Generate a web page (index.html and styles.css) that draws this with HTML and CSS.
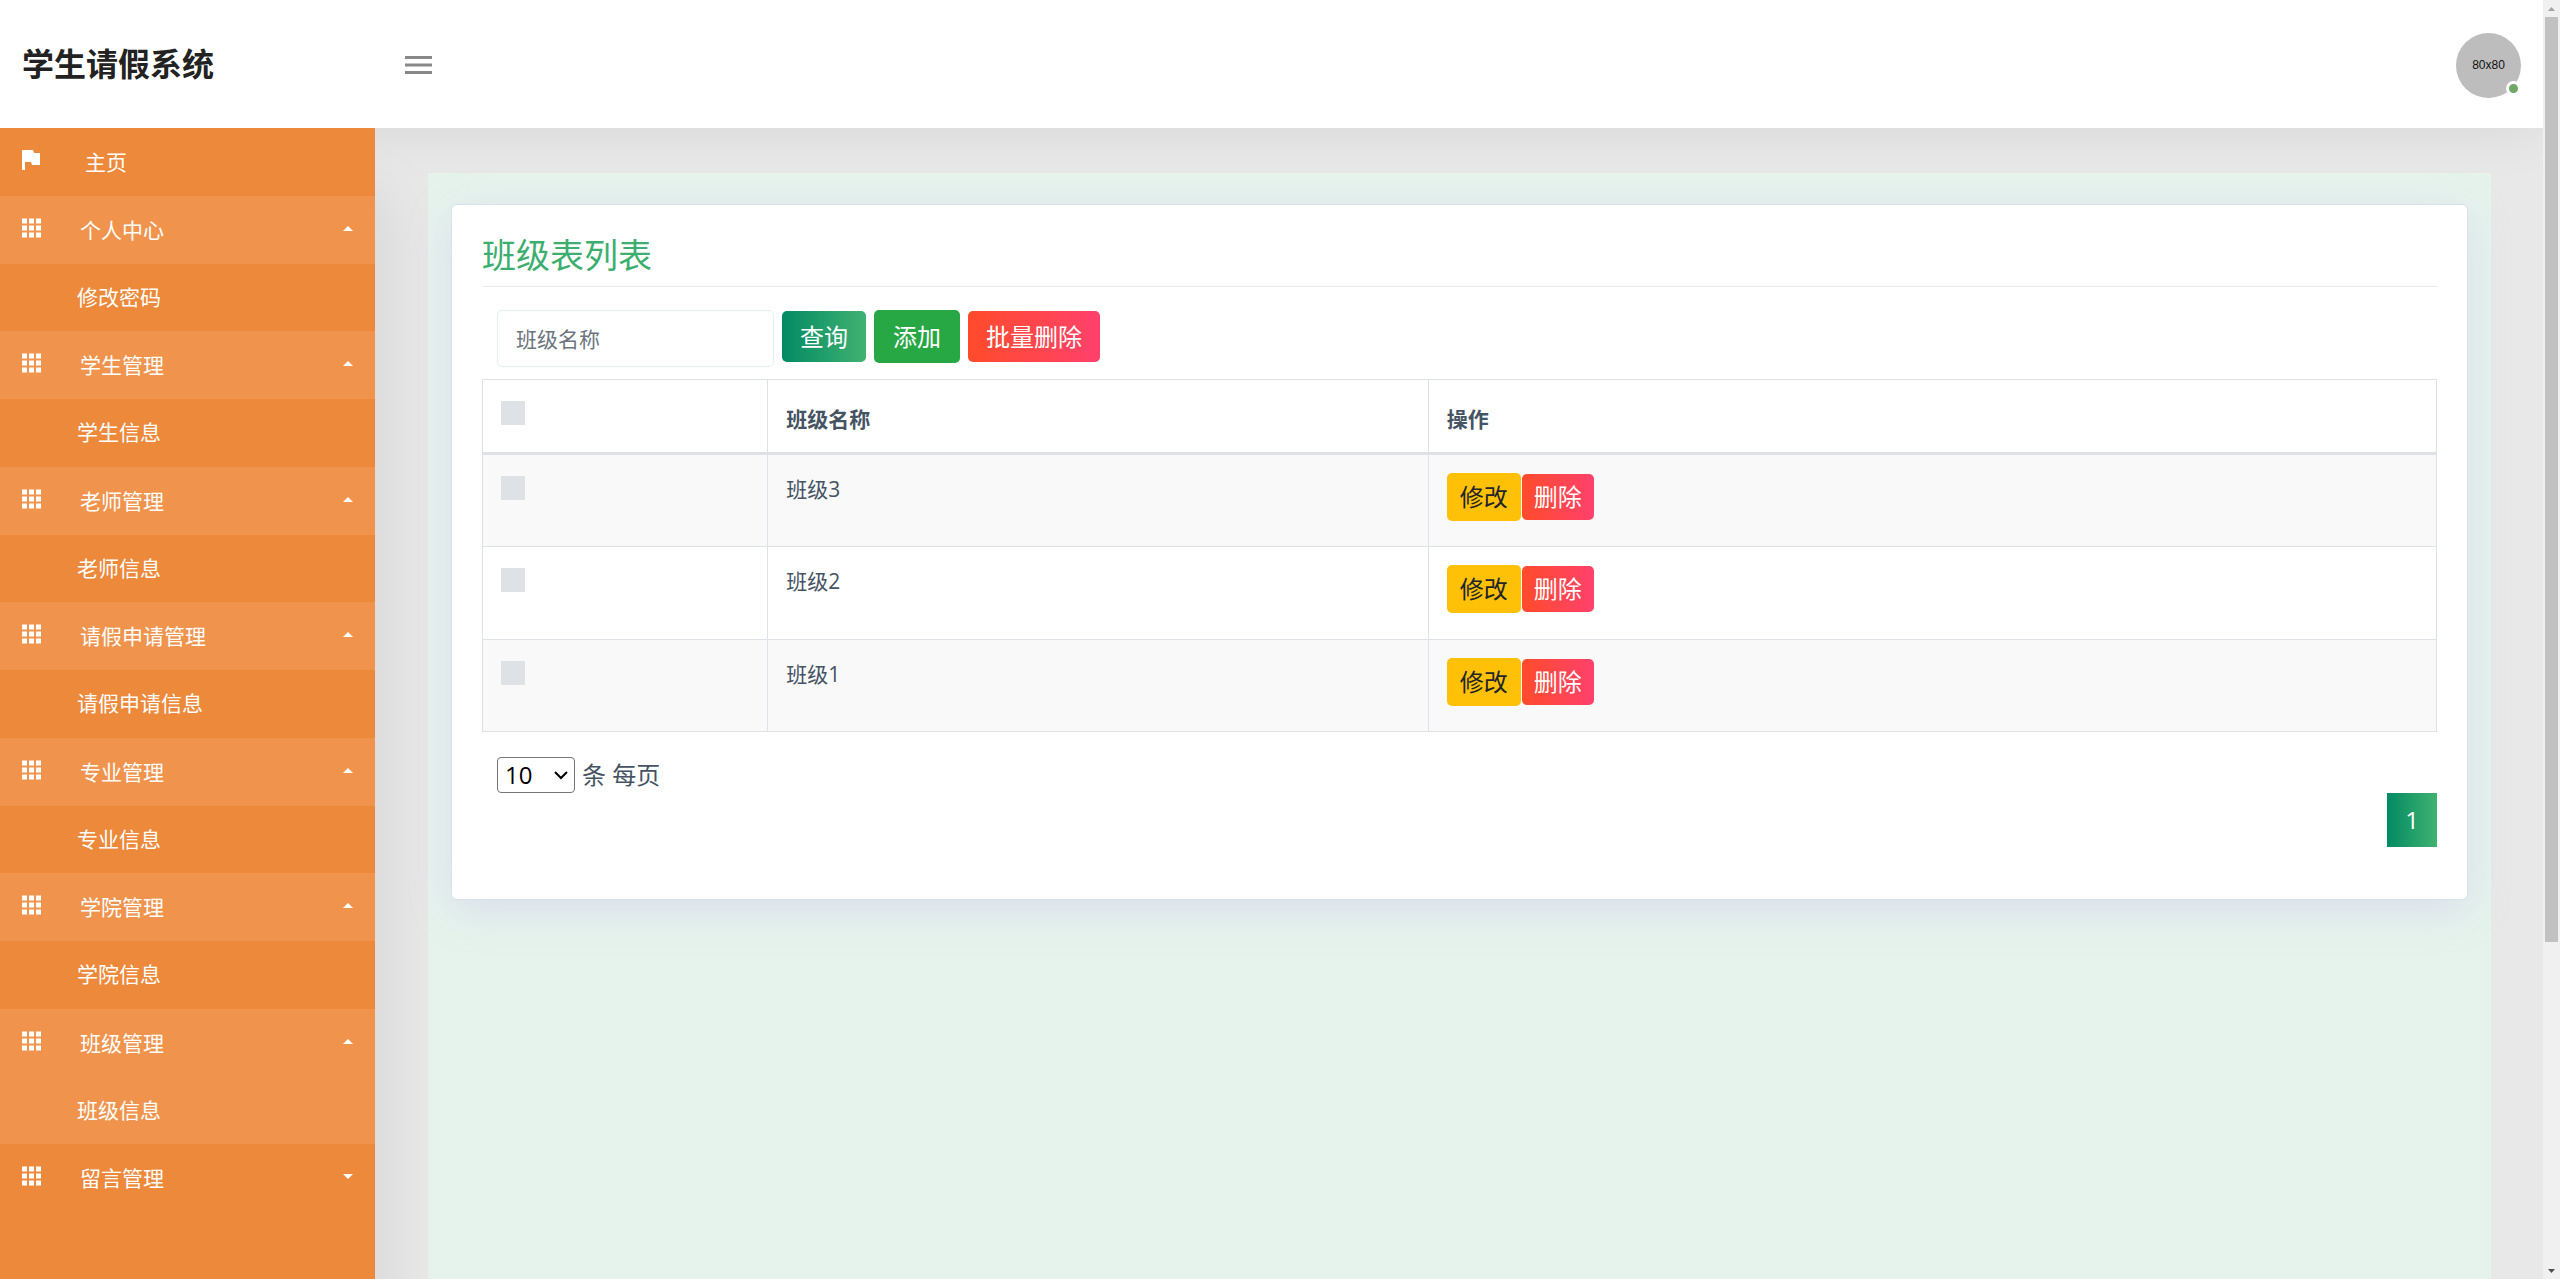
FILE: index.html
```html
<!DOCTYPE html>
<html lang="zh-CN">
<head>
<meta charset="utf-8">
<meta name="viewport" content="width=device-width, initial-scale=1">
<title>学生请假系统</title>
<link rel="stylesheet" href="styles.css">
</head>
<body>
<svg class="sprite" aria-hidden="true">
  <symbol id="grid" viewBox="0 0 19 19"><path d="M0 0h5v5H0zM7 0h5v5H7zM14 0h5v5h-5zM0 7h5v5H0zM7 7h5v5H7zM14 7h5v5h-5zM0 14h5v5H0zM7 14h5v5H7zM14 14h5v5h-5z"/></symbol>
  <symbol id="caret" viewBox="0 0 10 5"><path d="M0 5L5 0l5 5z"/></symbol>
</svg>
<header class="topbar">
  <h1 class="brand">学生请假系统</h1>
  <button class="toggle" type="button" aria-label="菜单"><svg viewBox="0 0 27 18"><path d="M0 0h27v3H0zM0 7.500h27v3H0zM0 15h27v3H0z"/></svg></button>
  <a class="avatar" href="#">80x80<span class="status"></span></a>
</header>
<div class="layout">
  <nav class="sidebar">
    <ul class="menu">
      <li><a class="parent home" href="#"><svg class="icon" viewBox="0 0 19 20"><path d="M0 0h11l1 3h6v12h-8l-1-3H3v8H0z"/></svg><span>主页</span></a></li>
      <li class="open"><a class="parent" href="#"><svg class="icon"><use href="#grid"/></svg><span>个人中心</span><svg class="caret"><use href="#caret"/></svg></a><a class="child" href="#">修改密码</a></li>
      <li class="open"><a class="parent" href="#"><svg class="icon"><use href="#grid"/></svg><span>学生管理</span><svg class="caret"><use href="#caret"/></svg></a><a class="child" href="#">学生信息</a></li>
      <li class="open"><a class="parent" href="#"><svg class="icon"><use href="#grid"/></svg><span>老师管理</span><svg class="caret"><use href="#caret"/></svg></a><a class="child" href="#">老师信息</a></li>
      <li class="open"><a class="parent" href="#"><svg class="icon"><use href="#grid"/></svg><span>请假申请管理</span><svg class="caret"><use href="#caret"/></svg></a><a class="child" href="#">请假申请信息</a></li>
      <li class="open"><a class="parent" href="#"><svg class="icon"><use href="#grid"/></svg><span>专业管理</span><svg class="caret"><use href="#caret"/></svg></a><a class="child" href="#">专业信息</a></li>
      <li class="open"><a class="parent" href="#"><svg class="icon"><use href="#grid"/></svg><span>学院管理</span><svg class="caret"><use href="#caret"/></svg></a><a class="child" href="#">学院信息</a></li>
      <li class="open"><a class="parent" href="#"><svg class="icon"><use href="#grid"/></svg><span>班级管理</span><svg class="caret"><use href="#caret"/></svg></a><a class="child active" href="#">班级信息</a></li>
      <li><a class="parent" href="#"><svg class="icon"><use href="#grid"/></svg><span>留言管理</span><svg class="caret down"><use href="#caret"/></svg></a></li>
    </ul>
  </nav>
  <main class="content">
    <div class="panel">
      <section class="card">
        <h2 class="title">班级表列表</h2>
        <form class="filters">
          <input class="search" type="text" placeholder="班级名称" aria-label="班级名称">
          <button class="btn green" type="button">查询</button>
          <button class="btn add" type="button">添加</button>
          <button class="btn red" type="button">批量删除</button>
        </form>
        <table class="data">
          <colgroup><col class="col-check"><col class="col-name"><col></colgroup>
          <thead>
            <tr><th class="pick"><input type="checkbox" aria-label="全选"></th><th>班级名称</th><th>操作</th></tr>
          </thead>
          <tbody>
            <tr><td><input type="checkbox" aria-label="班级3"></td><td>班级3</td><td><div class="actions"><button class="btn small edit" type="button">修改</button><button class="btn small red" type="button">删除</button></div></td></tr>
            <tr><td><input type="checkbox" aria-label="班级2"></td><td>班级2</td><td><div class="actions"><button class="btn small edit" type="button">修改</button><button class="btn small red" type="button">删除</button></div></td></tr>
            <tr><td><input type="checkbox" aria-label="班级1"></td><td>班级1</td><td><div class="actions"><button class="btn small edit" type="button">修改</button><button class="btn small red" type="button">删除</button></div></td></tr>
          </tbody>
        </table>
        <div class="per-page">
          <select id="size"><option>10</option><option>25</option><option>50</option></select>
          <label for="size">条 每页</label>
        </div>
        <div class="pager"><a class="page" href="#">1</a></div>
      </section>
    </div>
  </main>
</div>
<div class="scrollbar" aria-hidden="true">
  <svg class="arrow" viewBox="0 0 17 17"><path d="M5 11l3.500-4 3.500 4z" fill="#a3a3a3"/></svg>
  <div class="track"><div class="thumb"></div></div>
  <svg class="arrow" viewBox="0 0 17 17"><path d="M5 7h7l-3.500 4z" fill="#505050"/></svg>
</div>
</body>
</html>
```

FILE: styles.css
```css
* { box-sizing: border-box; }

body {
  margin: 0;
  height: 100vh;
  padding-right: 17px;
  display: flex;
  flex-direction: column;
  overflow: hidden;
  background: #e8e8e8;
  color: #455363;
  font: 24px/36px "Open Sans", "Noto Sans CJK SC", sans-serif;
}

a { color: inherit; text-decoration: none; }
button, input, select { font: inherit; }
.sprite { position: absolute; width: 0; height: 0; }

.topbar {
  flex: none;
  display: flex;
  align-items: center;
  height: 128px;
  padding: 0 22px;
  background: #fff;
  box-shadow: 0 0 60px rgba(0, 0, 0, .08);
}
.brand {
  width: 383px;
  margin: 0;
  color: #222;
  font-size: 32px;
  line-height: 48px;
}
.toggle { display: block; padding: 0; border: 0; background: none; }
.toggle svg { display: block; width: 27px; height: 18px; margin-top: 2px; fill: #888; }
.avatar {
  position: relative;
  width: 65px;
  height: 65px;
  margin-left: auto;
  margin-top: 3px;
  border-radius: 50%;
  background: #bdbdbd;
  color: #111;
  font: 12px/65px "Liberation Sans", sans-serif;
  text-align: center;
}
.status {
  position: absolute;
  right: 0;
  bottom: 2px;
  width: 15px;
  height: 15px;
  border: 3px solid #fff;
  border-radius: 50%;
  background: #6fa767;
}

.layout { flex: 1; display: flex; min-height: 0; }
.sidebar {
  position: relative;
  flex: none;
  width: 375px;
  background: #ed893a;
  color: #fff;
  font-size: 21px;
  box-shadow: 10px 60px 60px rgba(0, 0, 0, .08);
}
.menu { margin: 0; padding: 0; list-style: none; }
.parent {
  display: flex;
  align-items: center;
  height: 68px;
  padding: 0 22px;
}
.open .parent, .child.active { background: #f0944d; }
.icon { width: 19px; height: 20px; margin: 0 39px 4px 0; fill: #fff; }
.home .icon { margin-right: 44px; }
.caret { width: 10px; height: 5px; margin: 0 0 4px auto; fill: #fff; }
.caret.down { transform: rotate(180deg); }
.child {
  display: block;
  height: 68px;
  padding-left: 77px;
  line-height: 66px;
}
.open:nth-child(even) .child { height: 67px; }

.content { flex: 1; min-width: 0; padding: 45px 52px 0 53px; }
.panel { position: relative; height: 100%; padding: 32px 24px; background: #e5f3ec; }
.card {
  padding: 30px;
  border-radius: 5px;
  background: #fff;
  box-shadow: 0 0 0 1px #dbe3ea, 0 10px 40px rgba(214, 214, 236, .75);
}
.title {
  margin: 0 0 23px;
  padding-bottom: 11px;
  border-bottom: 1px solid #e9ecef;
  color: #3cae6f;
  font-size: 34px;
  font-weight: 400;
  line-height: 40px;
}
.filters {
  display: flex;
  gap: 8px;
  padding: 0 15px;
  margin-bottom: 12px;
}
.search {
  width: 277px;
  height: 57px;
  padding: 0 18px;
  border: 1px solid #e6f0ee;
  border-radius: 5px;
  color: #455363;
  font-size: 21px;
}
.search::placeholder { color: #6c757d; opacity: 1; }
.btn {
  height: 51px;
  margin-top: 1px;
  padding: 0 18px;
  border: 0;
  border-radius: 5px;
  color: #fff;
  line-height: 50px;
}
.green, .page { background: linear-gradient(90deg, #038a63, #3fb271); }
.red { background: linear-gradient(90deg, #ff4b2b, #ff416c); }
.add { height: 53px; margin-top: 0; padding: 0 19px; background: #28a745; }
.actions { display: flex; gap: 1px; }
.small { height: 46px; padding: 0 12px; line-height: 46px; }
.edit { height: 48px; margin-top: 0; padding: 0 13px; background: #ffc107; color: #212529; }

.data {
  width: 100%;
  table-layout: fixed;
  border-spacing: 0;
  border: solid #dee2e6;
  border-width: 1px 0 0 1px;
  font-size: 21px;
  line-height: 32px;
}
.col-check { width: 14.6%; }
.col-name { width: 33.8%; }
.data th, .data td {
  padding: 18px;
  border: solid #dee2e6;
  border-width: 0 1px 1px 0;
  text-align: left;
  vertical-align: top;
}
.data th { padding: 23px 18px 17px; border-bottom-width: 3px; }
.data .pick { padding-top: 18px; }
.data td { height: 92px; padding-bottom: 25px; }
.data tbody tr:nth-child(even) td { height: 93px; }
.data tbody tr:nth-child(odd) { background: #f9f9f9; }
.data input {
  display: block;
  appearance: none;
  width: 24px;
  height: 24px;
  margin: 3px 0 0;
  background: #dee2e6;
}
.data .btn { font-size: 24px; }

.per-page {
  display: flex;
  align-items: center;
  gap: 7px;
  padding: 25px 15px 0;
}
.per-page select {
  appearance: none;
  width: 78px;
  height: 36px;
  padding: 0 0 0 7px;
  border: 1px solid #767676;
  border-radius: 4px;
  background: #fff url("data:image/svg+xml,%3Csvg xmlns='http://www.w3.org/2000/svg' width='14' height='9'%3E%3Cpath d='M1 1l6 6 6-6' fill='none' stroke='%23000' stroke-width='2'/%3E%3C/svg%3E") no-repeat right 6px center;
  color: #000;
  line-height: 34px;
}
.pager { display: flex; justify-content: flex-end; padding-bottom: 22px; }
.page {
  width: 50px;
  height: 54px;
  color: #fff;
  line-height: 54px;
  text-align: center;
}

.scrollbar {
  position: fixed;
  top: 0;
  right: 0;
  bottom: 0;
  display: flex;
  flex-direction: column;
  width: 17px;
  background: #f0f0f0;
}
.arrow { flex: none; width: 17px; height: 17px; }
.track { flex: 1; padding: 0 2px; }
.thumb { height: 74.3%; background: #c1c1c1; }
```
